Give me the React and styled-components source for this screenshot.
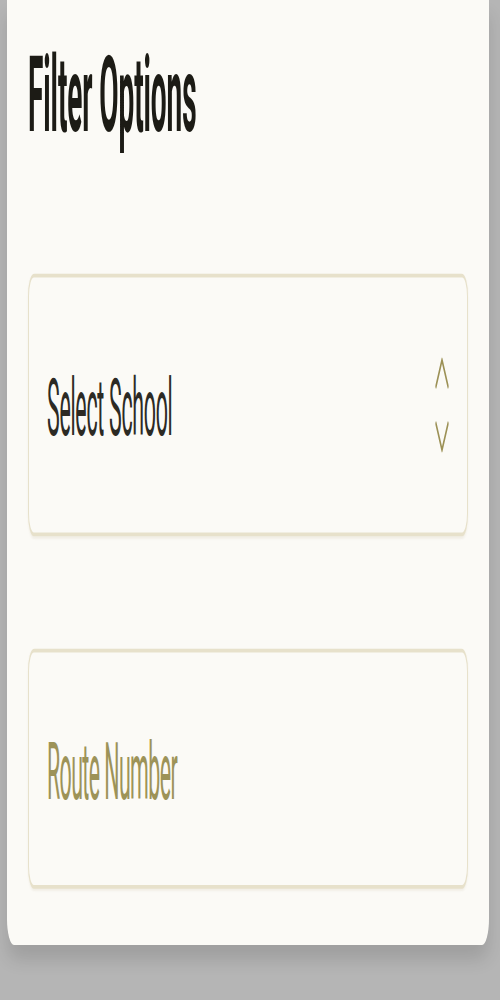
import React from 'react';
import styled, { createGlobalStyle } from 'styled-components';

// the whole sheet is drawn at its natural size, then stretched tall
const STRETCH = 3.75;

const GlobalStyle = createGlobalStyle`
  html, body {
    margin: 0;
    background: #b5b5b5;
  }
  * {
    box-sizing: border-box;
  }
`;

const Viewport = styled.div`
  width: 500px;
  height: 1000px;
  overflow: hidden;
`;

const Page = styled.div`
  width: 500px;
  padding: 0 11px 0 7px;
  transform: scaleY(${STRETCH});
  transform-origin: top left;
  font-family: Roboto, 'Liberation Sans', sans-serif;
`;

const Sheet = styled.section`
  padding: 12.4px 21px 14.7px;
  background: #fbfaf6;
  border-radius: 0 0 7px 7px;
  box-shadow: 0 4px 9px rgba(0, 0, 0, 0.12);
`;

const Title = styled.h2`
  margin: 0;
  font-size: 28px;
  line-height: 28px;
  font-weight: 700;
  letter-spacing: -0.1px;
  color: #1c1b15;
`;

const Fields = styled.div`
  display: flex;
  flex-direction: column;
  gap: 30.4px;
  margin-top: 33px;
`;

const fieldBox = `
  width: 100%;
  border: 1px solid #e7e1cb;
  border-radius: 6px;
  background: #fbfaf6;
  box-shadow: 0 0.5px 1px rgba(140, 120, 60, 0.08);
  font-family: Roboto, 'Liberation Sans', sans-serif;
  font-size: 21.4px;
`;

const SelectTrigger = styled.button`
  ${fieldBox}
  height: 69.7px;
  display: flex;
  align-items: center;
  justify-content: space-between;
  padding: 0 18px;
  cursor: pointer;
  text-align: left;
`;

const SelectValue = styled.span`
  color: #2c2a24;
  letter-spacing: -0.3px;
`;

const Chevrons = styled.svg`
  width: 14px;
  height: 26px;
  flex: none;
  color: #9c9156;
`;

const TextField = styled.input`
  ${fieldBox}
  height: 63.7px;
  padding: 0 18px;
  color: #2c2a24;
  letter-spacing: -0.6px;
  outline: none;

  &::placeholder {
    color: #9d9358;
    opacity: 1;
  }
`;

const UpDown = () => (
  <Chevrons viewBox="0 0 14 26" fill="none" stroke="currentColor" strokeWidth="1.3" strokeLinecap="round" strokeLinejoin="round">
    <path d="M1 8 L7 1 L13 8" />
    <path d="M1 18 L7 25 L13 18" />
  </Chevrons>
);

export default function App() {
  return (
    <>
      <GlobalStyle />
      <Viewport>
        <Page>
          <Sheet>
            <Title>Filter Options</Title>
            <Fields>
              <SelectTrigger type="button">
                <SelectValue>Select School</SelectValue>
                <UpDown />
              </SelectTrigger>
              <TextField type="text" placeholder="Route Number" />
            </Fields>
          </Sheet>
        </Page>
      </Viewport>
    </>
  );
}
